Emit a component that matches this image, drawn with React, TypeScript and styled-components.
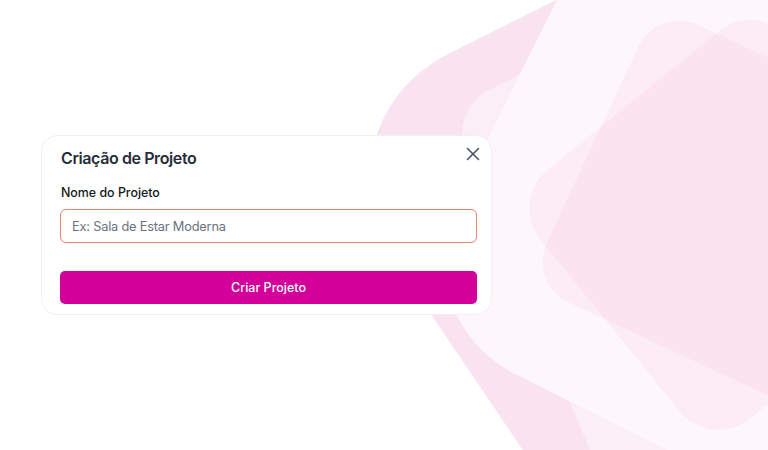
import React from 'react';
import styled, { createGlobalStyle } from 'styled-components';
import { X } from 'lucide-react';

type Pt = [number, number];

interface Blob {
  points: Pt[];
  radii: number[];
  fill: string;
}

// cantos arredondados para os polígonos do fundo (pontos em sentido horário)
const roundedPath = (pts: Pt[], radii: number[]) => {
  const n = pts.length;
  let d = '';
  for (let i = 0; i < n; i++) {
    const p = pts[i];
    const prev = pts[(i - 1 + n) % n];
    const next = pts[(i + 1) % n];
    const a = [prev[0] - p[0], prev[1] - p[1]];
    const b = [next[0] - p[0], next[1] - p[1]];
    const la = Math.hypot(a[0], a[1]);
    const lb = Math.hypot(b[0], b[1]);
    const ua = [a[0] / la, a[1] / la];
    const ub = [b[0] / lb, b[1] / lb];
    const ang = Math.acos(ua[0] * ub[0] + ua[1] * ub[1]);
    const r = Math.max(radii[i], 0.5);
    const dist = r / Math.tan(ang / 2);
    const s = [p[0] + ua[0] * dist, p[1] + ua[1] * dist];
    const e = [p[0] + ub[0] * dist, p[1] + ub[1] * dist];
    d += `${i === 0 ? 'M' : 'L'}${s[0].toFixed(1)} ${s[1].toFixed(1)} `;
    d += `A${r} ${r} 0 0 1 ${e[0].toFixed(1)} ${e[1].toFixed(1)} `;
  }
  return d + 'Z';
};

const blobs: Blob[] = [
  {
    points: [[1004, -224], [1100, 400], [657, 649], [304, 126]],
    radii: [0, 0, 0, 140],
    fill: '#f9e3f0',
  },
  {
    points: [[447.6, 110.7], [895, -113], [1100, 300], [641, 572]],
    radii: [50, 0, 0, 0],
    fill: '#fbeef6',
  },
  {
    points: [[399, 316], [667, -220], [1203, 48], [935, 584]],
    radii: [130, 0, 0, 0],
    fill: '#fdf6fa',
  },
  {
    points: [[758, -0.3], [960, 249], [711, 450], [509, 201]],
    radii: [50, 50, 50, 50],
    fill: 'rgba(236, 72, 153, 0.05)',
  },
  {
    points: [[657.4, 5.8], [934.6, 135.2], [805, 412.8], [527.8, 283.4]],
    radii: [45, 45, 45, 45],
    fill: 'rgba(236, 72, 153, 0.05)',
  },
];

const GlobalStyle = createGlobalStyle`
  html, body {
    margin: 0;
    padding: 0;
    height: 100%;
  }
  body {
    background: #ffffff;
    font-family: Inter, "Noto Sans", "Liberation Sans", sans-serif;
    overflow: hidden;
  }
  #root {
    height: 100%;
  }
`;

const Page = styled.main`
  position: relative;
  box-sizing: border-box;
  height: 100vh;
  display: flex;
  align-items: center;
  padding-left: 41px;
`;

const Backdrop = styled.svg`
  position: absolute;
  inset: 0;
  width: 100%;
  height: 100%;
`;

const Card = styled.section`
  position: relative;
  z-index: 1;
  box-sizing: border-box;
  width: 451px;
  padding: 10px 14px 10px 18px;
  background: #ffffff;
  border: 1px solid #f1eff3;
  border-radius: 16px;
`;

const Header = styled.header`
  display: flex;
  align-items: center;
  justify-content: space-between;
  height: 24px;
`;

const Title = styled.h2`
  margin: 0 0 0 1px;
  font-size: 16px;
  line-height: 24px;
  font-weight: 600;
  letter-spacing: -0.4px;
  color: #272d38;
`;

const CloseButton = styled.button`
  display: flex;
  align-self: flex-start;
  padding: 0;
  margin: -3px -7px 0 0;
  border: none;
  background: none;
  color: #4b5563;
  cursor: pointer;
`;

const Label = styled.label`
  display: block;
  margin: 13px 0 0 1px;
  font-size: 12.4px;
  line-height: 20px;
  font-weight: 500;
  color: #141820;
`;

const Input = styled.input`
  display: block;
  box-sizing: border-box;
  width: 100%;
  height: 34px;
  margin-top: 6px;
  padding: 0 11px;
  border: 1.5px solid #e4866f;
  border-radius: 6px;
  font-family: inherit;
  font-size: 12.8px;
  letter-spacing: -0.2px;
  color: #111827;
  outline: none;

  &::placeholder {
    color: #6b7280;
  }
`;

const SubmitButton = styled.button`
  display: block;
  width: 100%;
  height: 33px;
  margin-top: 28px;
  border: none;
  border-radius: 5px;
  background: #d30099;
  color: #ffffff;
  font-family: inherit;
  font-size: 12.5px;
  font-weight: 500;
  cursor: pointer;
`;

const App = () => (
  <>
    <GlobalStyle />
    <Page>
      <Backdrop viewBox="0 0 768 450" preserveAspectRatio="xMinYMid slice">
        {blobs.map((b, i) => (
          <path key={i} d={roundedPath(b.points, b.radii)} fill={b.fill} />
        ))}
      </Backdrop>
      <Card>
        <Header>
          <Title>Criação de Projeto</Title>
          <CloseButton aria-label="Fechar">
            <X size={22} strokeWidth={1.75} />
          </CloseButton>
        </Header>
        <Label htmlFor="nome">Nome do Projeto</Label>
        <Input id="nome" placeholder="Ex: Sala de Estar Moderna" />
        <SubmitButton>Criar Projeto</SubmitButton>
      </Card>
    </Page>
  </>
);

export default App;
